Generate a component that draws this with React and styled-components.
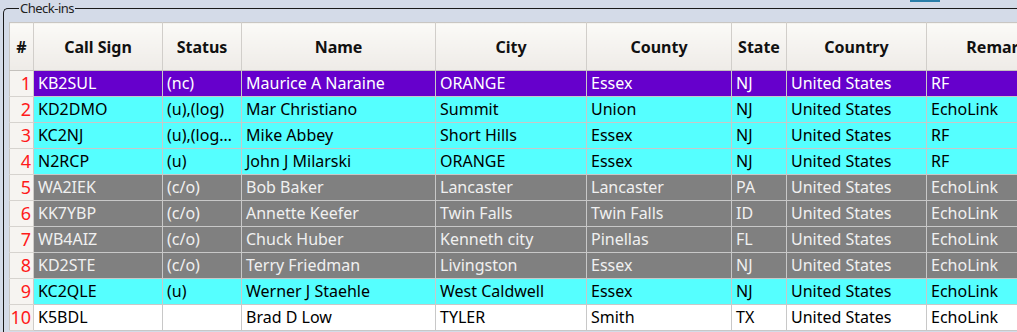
import React from "react";
import styled, { createGlobalStyle } from "styled-components";

const Global = createGlobalStyle`
  html, body { margin: 0; padding: 0; }
  body {
    width: 1017px; height: 332px; overflow: hidden;
    background: #d4dbe8;
    font-family: "Noto Sans", "Open Sans", sans-serif;
  }
`;

const Page = styled.div`
  position: relative;
  width: 1017px;
  height: 332px;
  overflow: hidden;
`;

const TopButton = styled.div`
  position: absolute;
  left: 910px;
  top: 0;
  width: 30px;
  height: 2px;
  background: #2a7ea8;
`;

const Group = styled.fieldset`
  margin: 0 0 0 3px;
  padding: 6px 0 0 5px;
  border: 1px solid #1a1a1a;
  border-right: none;
  border-bottom: none;
  border-top-left-radius: 5px;
  min-width: 0;
  width: 1014px;
  box-sizing: border-box;
  height: 340px;
`;

const Legend = styled.legend`
  font-size: 13px;
  letter-spacing: -0.5px;
  color: #222;
  padding: 0 1px 0 1px;
  margin-left: 10px;
  line-height: 16px;
  height: 16px;
`;

const Table = styled.table`
  border-collapse: collapse;
  table-layout: fixed;
  width: 1067px;
  font-size: 16px;
  border-left: 1px solid #c9c6c2;
  border-top: 1px solid #c9c6c2;
`;

const Th = styled.th`
  height: 47px;
  padding: 0;
  font-weight: 700;
  font-size: 16px;
  color: #111;
  text-align: center;
  white-space: nowrap;
  overflow: hidden;
  background: linear-gradient(#fbfaf7, #eeebe7);
  border-right: 1px solid #d1ceca;
  border-bottom: 1px solid #c4c1bd;
`;

const bgs = {
  purple: "#6600cc",
  cyan: "#55ffff",
  gray: "#808080",
  white: "#ffffff",
};
const fgs = {
  purple: "#ffffff",
  cyan: "#000000",
  gray: "#f0f0f0",
  white: "#000000",
};

const IndexCell = styled.td`
  height: 25px;
  padding: 0 2px 0 0;
  text-align: right;
  color: #ff1a1a;
  font-size: 18px;
  background: #f6f4f1;
  border-right: 1px solid #cfccc8;
  border-bottom: 1px solid #d6d3cf;
  line-height: 25px;
`;

const Td = styled.td`
  height: 25px;
  padding: 0 5px 0 4px;
  white-space: nowrap;
  overflow: hidden;
  text-overflow: ellipsis;
  line-height: 25px;
  background: ${(p) => bgs[p.$tone]};
  color: ${(p) => fgs[p.$tone]};
  border-right: 1px solid #c8c8c8;
  border-bottom: 1px solid #c8c8c8;
`;

const cols = [
  { label: "#", w: 24 },
  { label: "Call Sign", w: 129 },
  { label: "Status", w: 79 },
  { label: "Name", w: 194 },
  { label: "City", w: 151 },
  { label: "County", w: 145 },
  { label: "State", w: 55 },
  { label: "Country", w: 140 },
  { label: "Remarks", w: 150 },
];

const rows = [
  ["purple", "KB2SUL", "(nc)", "Maurice A Naraine", "ORANGE", "Essex", "NJ", "United States", "RF"],
  ["cyan", "KD2DMO", "(u),(log)", "Mar Christiano", "Summit", "Union", "NJ", "United States", "EchoLink"],
  ["cyan", "KC2NJ", "(u),(log),(x)", "Mike Abbey", "Short Hills", "Essex", "NJ", "United States", "RF"],
  ["cyan", "N2RCP", "(u)", "John J Milarski", "ORANGE", "Essex", "NJ", "United States", "RF"],
  ["gray", "WA2IEK", "(c/o)", "Bob Baker", "Lancaster", "Lancaster", "PA", "United States", "EchoLink"],
  ["gray", "KK7YBP", "(c/o)", "Annette Keefer", "Twin Falls", "Twin Falls", "ID", "United States", "EchoLink"],
  ["gray", "WB4AIZ", "(c/o)", "Chuck Huber", "Kenneth city", "Pinellas", "FL", "United States", "EchoLink"],
  ["gray", "KD2STE", "(c/o)", "Terry Friedman", "Livingston", "Essex", "NJ", "United States", "EchoLink"],
  ["cyan", "KC2QLE", "(u)", "Werner J Staehle", "West Caldwell", "Essex", "NJ", "United States", "EchoLink"],
  ["white", "K5BDL", "", "Brad D Low", "TYLER", "Smith", "TX", "United States", "EchoLink"],
];

export default function App() {
  return (
    <Page>
      <Global />
      <TopButton />
      <Group>
        <Legend>Check-ins</Legend>
        <Table>
          <colgroup>
            {cols.map((c) => (
              <col key={c.label} style={{ width: c.w }} />
            ))}
          </colgroup>
          <thead>
            <tr>
              {cols.map((c) => (
                <Th key={c.label}>{c.label}</Th>
              ))}
            </tr>
          </thead>
          <tbody>
            {rows.map((r, i) => {
              const [tone, ...cells] = r;
              return (
                <tr key={i}>
                  <IndexCell>{i + 1}</IndexCell>
                  {cells.map((c, j) => (
                    <Td key={j} $tone={tone}>
                      {c}
                    </Td>
                  ))}
                </tr>
              );
            })}
          </tbody>
        </Table>
      </Group>
    </Page>
  );
}
